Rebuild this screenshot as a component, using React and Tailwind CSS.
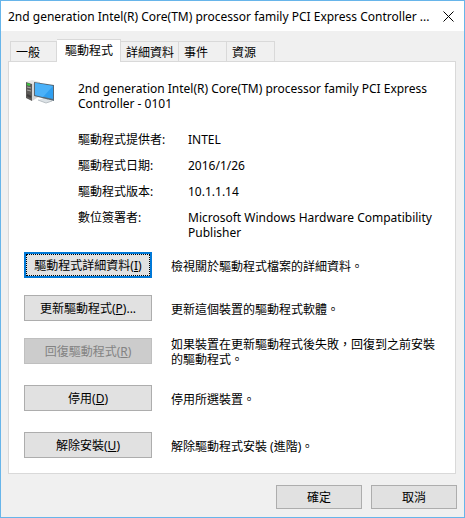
import React, { useState } from 'react';

const DEVICE_NAME = '2nd generation Intel(R) Core(TM) processor family PCI Express Controller - 0101';
const WINDOW_TITLE = '2nd generation Intel(R) Core(TM) processor family PCI Express Controller ...';

const TABS = [
    { id: 'general', label: '一般', width: 'w-[47px]' },
    { id: 'driver', label: '驅動程式', width: 'w-16' },
    { id: 'details', label: '詳細資料', width: 'w-[58px]' },
    { id: 'events', label: '事件', width: 'w-12' },
    { id: 'resources', label: '資源', width: 'w-12' },
];

const FIELDS = [
    { label: '驅動程式提供者:', value: 'INTEL' },
    { label: '驅動程式日期:', value: '2016/1/26' },
    { label: '驅動程式版本:', value: '10.1.1.14' },
    { label: '數位簽署者:', value: 'Microsoft Windows Hardware Compatibility Publisher' },
];

const ACTIONS = [
    { label: '驅動程式詳細資料', hotkey: 'I', text: '檢視關於驅動程式檔案的詳細資料。', focused: true },
    { label: '更新驅動程式', hotkey: 'P', suffix: '...', text: '更新這個裝置的驅動程式軟體。' },
    { label: '回復驅動程式', hotkey: 'R', text: '如果裝置在更新驅動程式後失敗，回復到之前安裝的驅動程式。', disabled: true },
    { label: '停用', hotkey: 'D', text: '停用所選裝置。', spaced: true },
    { label: '解除安裝', hotkey: 'U', text: '解除驅動程式安裝 (進階)。', spaced: true },
];

const ComputerIcon = () => (
    <svg width="32" height="32" viewBox="0 0 32 32" aria-hidden="true" className="block">
        <path d="M8 5 L16 4 L16 18 L8 23 Z" fill="#d6d6d6" />
        <path d="M2 4 L8 2 L16 4 L8 6 Z" fill="#e6e6e6" />
        <path d="M2 4 L8 6 L8 23 L2 20 Z" fill="#5c5a58" />
        <path d="M3 9 L7 10 M3 12 L7 13" stroke="#a9a7a5" />
        <path d="M3 17 L7 19" stroke="#3f3d3c" strokeWidth="2" />
        <path d="M3 6 L6 7" stroke="#3ccb3f" strokeWidth="2" />
        <path d="M19 19 L24 20 L24 24 L19 23 Z" fill="#b3bac0" />
        <path d="M14 22 L20 20 L28 23 L22 25 Z" fill="#dce2e6" />
        <path d="M14 22 L22 25 L28 23" fill="none" stroke="#b9c0c5" />
        <path d="M10 4 L30 7 L30 23 L10 18 Z" fill="#596874" />
        <path d="M11 5 L29 8 L29 21 L11 17 Z" fill="#2f9ff0" />
        <path d="M11 5 L29 8 L19 19 L11 17 Z" fill="#4bb1f8" />
    </svg>
);

const TabButton = ({ tab, active, onSelect }) => (
    <button
        type="button"
        role="tab"
        id={`tab-${tab.id}`}
        aria-selected={active}
        onClick={() => onSelect(tab.id)}
        className={`border-[#d9d9d9] border-t border-r text-left outline-none first:border-l ${tab.width} ${
            active ? 'z-10 -mb-px h-[23px] bg-white pb-0.5 pl-2' : 'h-5 bg-[#f0f0f0] pt-px pl-[5px]'
        }`}
    >
        {tab.label}
    </button>
);

const ActionRow = ({ action }) => (
    <div className={`flex h-[26px] items-center gap-[19px] ${action.spaced ? 'mt-[21px]' : 'mt-[17px] first:mt-0'}`}>
        <button
            type="button"
            disabled={action.disabled}
            aria-describedby={`hint-${action.hotkey}`}
            className={`h-[26px] w-32 shrink-0 ${
                action.focused
                    ? 'border-2 border-[#0078d7] bg-[#e1e1e1]'
                    : action.disabled
                        ? 'border border-[#bfbfbf] bg-[#cccccc] text-[#838383]'
                        : 'border border-[#adadad] bg-[#e1e1e1]'
            }`}
        >
            <span className={`flex size-full items-center justify-center ${action.focused ? 'border border-dotted border-black' : ''}`}>
                {action.label}(<u>{action.hotkey}</u>){action.suffix}
            </span>
        </button>
        <p id={`hint-${action.hotkey}`} className="pt-0.5">{action.text}</p>
    </div>
);

const DialogButton = ({ children }) => (
    <button type="button" className="h-6 w-[86px] border border-[#adadad] bg-[#e1e1e1]">{children}</button>
);

const App = () => {
    const [tab, setTab] = useState('driver');

    return (
        <div className="flex min-h-screen flex-col border border-[#67b5ea] bg-[#f0f0f0] font-['Noto_Sans','Noto_Sans_CJK_TC',sans-serif] text-[12px] leading-[15px] text-black">
            <header className="flex min-h-[30px] items-center bg-white pl-[7px]">
                <h1 className="flex-1 whitespace-nowrap">{WINDOW_TITLE}</h1>
                <button type="button" aria-label="關閉" className="flex w-[31px] items-center justify-center self-stretch">
                    <svg width="11" height="11" viewBox="0 0 11 11" aria-hidden="true">
                        <path d="M0.5 0.5 L10.5 10.5 M10.5 0.5 L0.5 10.5" stroke="#000" fill="none" />
                    </svg>
                </button>
            </header>

            <main className="flex flex-1 flex-col pt-2 pr-2 pl-[7px]">
                <div role="tablist" className="flex items-end pl-0.5">
                    {TABS.map((item) => (
                        <TabButton key={item.id} tab={item} active={item.id === tab} onSelect={setTab} />
                    ))}
                </div>

                <section role="tabpanel" aria-labelledby={`tab-${tab}`} className="border border-[#d9d9d9] bg-white px-[15px] pt-4 pb-[15px]">
                    <div className="flex gap-[22px]">
                        <ComputerIcon />
                        <h2 className="flex-1 pt-[3px]">{DEVICE_NAME}</h2>
                    </div>

                    <dl className="mt-[21px] space-y-[11px] pl-[54px]">
                        {FIELDS.map((field) => (
                            <div key={field.label} className="flex">
                                <dt className="w-[110px] shrink-0">{field.label}</dt>
                                <dd className="flex-1">{field.value}</dd>
                            </div>
                        ))}
                    </dl>

                    <div className="mt-3">
                        {ACTIONS.map((action) => (
                            <ActionRow key={action.hotkey} action={action} />
                        ))}
                    </div>
                </section>
            </main>

            <footer className="flex justify-end gap-[9px] pt-[9px] pr-[7px] pb-2">
                <DialogButton>確定</DialogButton>
                <DialogButton>取消</DialogButton>
            </footer>
        </div>
    );
};

export default App;
